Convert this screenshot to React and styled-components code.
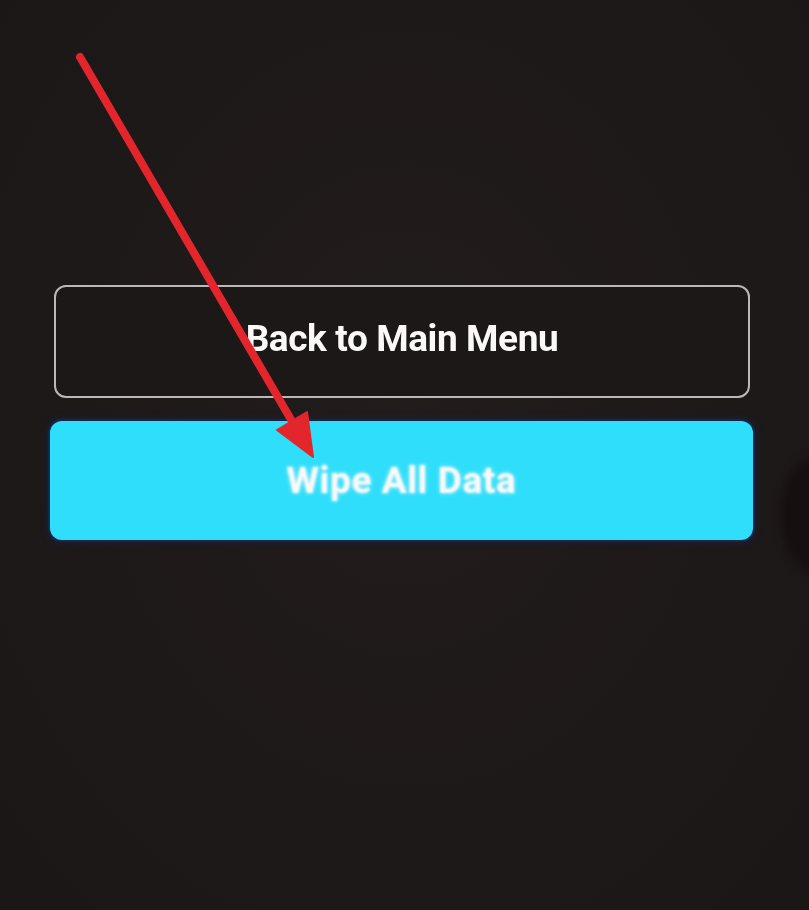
import React from "react";
import styled, { createGlobalStyle } from "styled-components";

const Global = createGlobalStyle`
  html, body {
    margin: 0;
    padding: 0;
    background: #1f1a1a;
  }
  #root {
    min-height: 910px;
  }
`;

const Screen = styled.div`
  position: relative;
  width: 809px;
  height: 910px;
  overflow: hidden;
  background: radial-gradient(ellipse at 50% 45%, #221c1c 0%, #1e1919 60%, #1b1717 100%);
  font-family: Roboto, "Noto Sans", "Liberation Sans", sans-serif;
`;

const Actions = styled.div`
  display: flex;
  flex-direction: column;
  gap: 23px;
  padding: 285px 56px 0 50px;
`;

const Button = styled.button`
  display: flex;
  align-items: center;
  justify-content: center;
  box-sizing: border-box;
  height: ${(p) => (p.$primary ? "119px" : "113px")};
  margin: ${(p) => (p.$primary ? "0" : "0 3px 0 4px")};
  border-radius: 12px;
  border: ${(p) => (p.$primary ? "none" : "2.5px solid #bdb8b8")};
  background: ${(p) => (p.$primary ? "#2fdefa" : "#1d1818")};
  box-shadow: ${(p) =>
    p.$primary ? "0 0 0 2px #14274a, 0 0 6px 2px rgba(20, 40, 90, 0.6)" : "none"};
  color: #fbf8f8;
  font-family: inherit;
  font-weight: 700;
  font-size: 37px;
  padding: ${(p) => (p.$primary ? "0" : "0 0 6px 0")};
  cursor: pointer;
`;

const Label = styled.span`
  letter-spacing: ${(p) => (p.$soft ? "0.6px" : "-0.4px")};
  filter: ${(p) => (p.$soft ? "blur(0.9px)" : "blur(0.4px)")};
  text-shadow: ${(p) => (p.$soft ? "0 0 4px rgba(255,255,255,0.6)" : "none")};
`;

const Pointer = styled.svg`
  position: absolute;
  inset: 0;
  pointer-events: none;
`;

const EdgeShadow = styled.div`
  position: absolute;
  right: -52px;
  top: 455px;
  width: 80px;
  height: 120px;
  border-radius: 50%;
  background: #150f10;
  filter: blur(4px);
`;

export default function App() {
  return (
    <>
      <Global />
      <Screen>
        <Actions>
          <Button>
            <Label>Back to Main Menu</Label>
          </Button>
          <Button $primary>
            <Label $soft>Wipe All Data</Label>
          </Button>
        </Actions>
        <EdgeShadow />
        <Pointer width="809" height="910" viewBox="0 0 809 910">
          <line
            x1="80"
            y1="57"
            x2="293"
            y2="423"
            stroke="#e3262b"
            strokeWidth="8"
            strokeLinecap="round"
          />
          <polygon points="313,457 277,430 307,412" fill="#e3262b" stroke="#e3262b" strokeWidth="2" strokeLinejoin="round" />
        </Pointer>
      </Screen>
    </>
  );
}
